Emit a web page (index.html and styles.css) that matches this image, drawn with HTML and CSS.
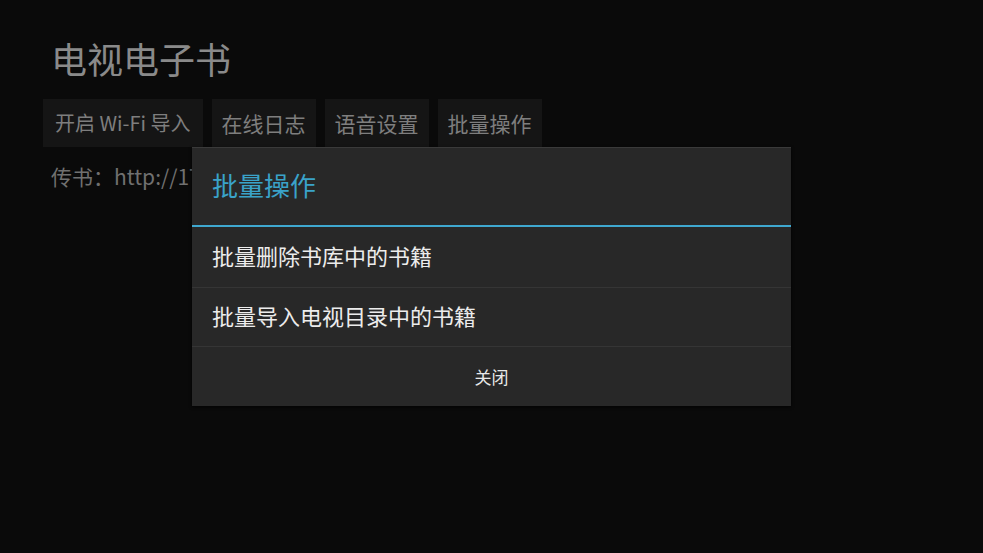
FILE: index.html
```html
<!DOCTYPE html>
<html lang="zh-CN">
<head>
<meta charset="utf-8">
<title>电视电子书</title>
<link rel="stylesheet" href="styles.css">
</head>
<body>
<div class="app">
  <h1 class="title">电视电子书</h1>
  <div class="toolbar">
    <div class="btn btn-wide">开启 Wi-Fi 导入</div>
    <div class="btn">在线日志</div>
    <div class="btn">语音设置</div>
    <div class="btn">批量操作</div>
  </div>
  <div class="url">传书：http://172.16.1.100:8080</div>
</div>
<div class="dialog">
  <div class="dialog-title">批量操作</div>
  <div class="dialog-rule"></div>
  <div class="dialog-item item-first">批量删除书库中的书籍</div>
  <div class="dialog-item">批量导入电视目录中的书籍</div>
  <div class="dialog-close">关闭</div>
</div>
</body>
</html>
```
FILE: styles.css
```css
html, body {
  margin: 0;
  padding: 0;
  width: 983px;
  height: 553px;
  overflow: hidden;
  background: #0a0a0a;
  font-family: "Noto Sans CJK SC", "Noto Sans", sans-serif;
}
.app {
  padding: 36px 0 0 43px;
  display: flex;
  flex-direction: column;
  align-items: flex-start;
}
.title {
  margin: 0 0 19px 8px;
  font-size: 36px;
  line-height: 44px;
  font-weight: 400;
  color: #8a8a8a;
}
.toolbar {
  display: flex;
  gap: 9px;
}
.btn {
  height: 48px;
  padding: 0 10px 1px;
  box-sizing: border-box;
  display: flex;
  align-items: center;
  background: #151515;
  color: #7e7e7e;
  font-size: 21px;
  white-space: nowrap;
}
.btn-wide {
  padding: 0 12px 1px;
  font-size: 20px;
}
.url {
  margin: 14px 0 0 8px;
  font-size: 21px;
  line-height: 30px;
  color: #707070;
  white-space: nowrap;
}
.dialog {
  position: absolute;
  left: 192px;
  top: 147px;
  width: 599px;
  background: #282828;
  border-top: 1px solid #3a3a3a;
  box-shadow: 0 1px 3px rgba(0,0,0,0.8);
  display: flex;
  flex-direction: column;
}
.dialog-title {
  height: 77px;
  padding: 0 0 5px 20px;
  box-sizing: border-box;
  display: flex;
  align-items: center;
  font-size: 26px;
  color: #3aa3c9;
}
.dialog-rule {
  height: 2px;
  background: #3fa8d0;
}
.dialog-item {
  height: 59px;
  padding: 0 0 4px 20px;
  box-sizing: border-box;
  display: flex;
  align-items: center;
  font-size: 22px;
  color: #ececec;
  border-bottom: 1px solid #353535;
}
.item-first {
  height: 61px;
}
.dialog-close {
  height: 59px;
  padding-bottom: 1px;
  box-sizing: border-box;
  display: flex;
  align-items: center;
  justify-content: center;
  font-size: 17px;
  color: #e8e8e8;
}
```
